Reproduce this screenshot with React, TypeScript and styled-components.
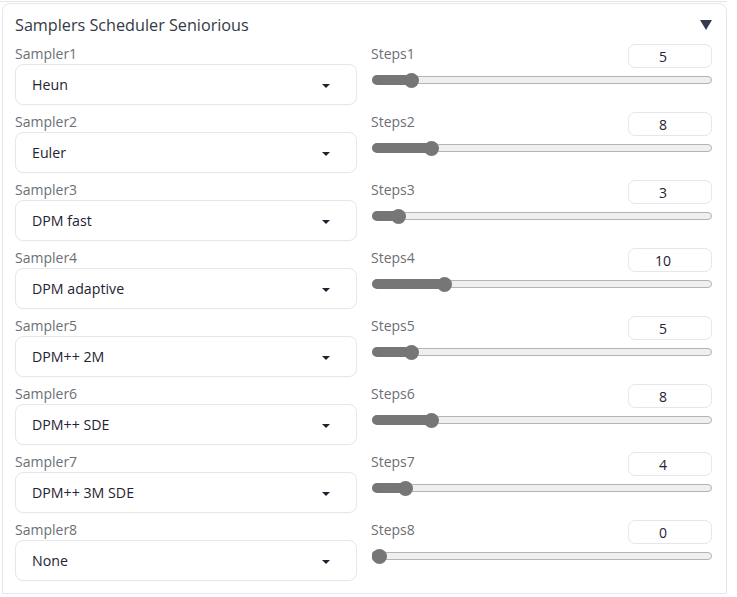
import React from "react";
import styled, { createGlobalStyle } from "styled-components";

const GlobalStyle = createGlobalStyle`
  html, body { margin: 0; padding: 0; background: #ffffff; }
  body { font-family: "Open Sans", "Noto Sans", "Liberation Sans", sans-serif; }
  * { box-sizing: border-box; }
`;

const Page = styled.div`
  width: 727px;
  padding-top: 1px;
`;

const TopRule = styled.div`
  height: 1px;
  background: #e4e4e7;
`;

const Panel = styled.section`
  margin: 1px 0 0 2px;
  width: 725px;
  height: 591px;
  border: 1px solid #e5e7eb;
  border-radius: 8px 8px 0 0;
  padding: 10px 13px 0 12px;
  display: flex;
  flex-direction: column;
  gap: 8px;
`;

const Header = styled.div`
  display: flex;
  align-items: center;
  justify-content: space-between;
  height: 22px;
`;

const Title = styled.span`
  font-size: 16.2px;
  line-height: 22px;
  color: #333a45;
`;

const Toggle = styled.span`
  width: 0;
  height: 0;
  margin-right: 1px;
  border-left: 6px solid transparent;
  border-right: 6px solid transparent;
  border-top: 10px solid #363c4e;
`;

const Grid = styled.div`
  display: grid;
  grid-template-columns: 342px 341px;
  column-gap: 14px;
  row-gap: 7px;
`;

const Field = styled.div`
  display: flex;
  flex-direction: column;
`;

const Label = styled.span`
  font-size: 14px;
  line-height: 20px;
  color: #6b6f76;
`;

const Select = styled.div`
  height: 41px;
  border: 1px solid #e5e7eb;
  border-radius: 8px;
  display: flex;
  align-items: center;
  justify-content: space-between;
  padding: 0 26px 0 16px;
  font-size: 14.2px;
  color: #1f2333;
  box-shadow: 0 1px 1px rgba(0, 0, 0, 0.02);
`;

const Caret = styled.span`
  width: 0;
  height: 0;
  margin-top: 2px;
  border-left: 4px solid transparent;
  border-right: 4px solid transparent;
  border-top: 4px solid #1f2333;
`;

const StepsHead = styled.div`
  display: flex;
  align-items: flex-start;
  justify-content: space-between;
  height: 24px;
`;

const NumberBox = styled.div`
  width: 84px;
  height: 24px;
  border: 1px solid #e5e7eb;
  border-radius: 7px;
  display: flex;
  align-items: center;
  justify-content: center;
  padding-right: 14px;
  font-size: 14px;
  color: #1f2333;
`;

const SliderArea = styled.div`
  height: 21px;
  display: flex;
  align-items: center;
  padding-top: 3px;
`;

const Track = styled.div`
  position: relative;
  width: 341px;
  height: 8px;
  margin-left: 1px;
  border: 1px solid #b4b4b4;
  border-radius: 4px;
  background: #efefef;
`;

const Fill = styled.div`
  position: absolute;
  left: -1px;
  top: -2px;
  height: 10px;
  border-radius: 5px;
  background: #767676;
`;

const Thumb = styled.div`
  position: absolute;
  top: 50%;
  width: 15px;
  height: 15px;
  margin-left: -7.5px;
  margin-top: -7.5px;
  border-radius: 50%;
  background: #767676;
`;

const rows: { sampler: string; steps: number }[] = [
  { sampler: "Heun", steps: 5 },
  { sampler: "Euler", steps: 8 },
  { sampler: "DPM fast", steps: 3 },
  { sampler: "DPM adaptive", steps: 10 },
  { sampler: "DPM++ 2M", steps: 5 },
  { sampler: "DPM++ SDE", steps: 8 },
  { sampler: "DPM++ 3M SDE", steps: 4 },
  { sampler: "None", steps: 0 },
];

const MAX = 50;

function Slider({ value }: { value: number }) {
  const pos = 7 + (326 * value) / MAX;
  return (
    <SliderArea>
      <Track>
        <Fill style={{ width: `${pos}px` }} />
        <Thumb style={{ left: `${pos - 1}px` }} />
      </Track>
    </SliderArea>
  );
}

export default function App() {
  return (
    <Page>
      <GlobalStyle />
      <TopRule />
      <Panel>
        <Header>
          <Title>Samplers Scheduler Seniorious</Title>
          <Toggle />
        </Header>
        <Grid>
          {rows.map((r, i) => (
            <React.Fragment key={i}>
              <Field>
                <Label>Sampler{i + 1}</Label>
                <Select>
                  <span>{r.sampler}</span>
                  <Caret />
                </Select>
              </Field>
              <Field>
                <StepsHead>
                  <Label>Steps{i + 1}</Label>
                  <NumberBox>{r.steps}</NumberBox>
                </StepsHead>
                <Slider value={r.steps} />
              </Field>
            </React.Fragment>
          ))}
        </Grid>
      </Panel>
    </Page>
  );
}
